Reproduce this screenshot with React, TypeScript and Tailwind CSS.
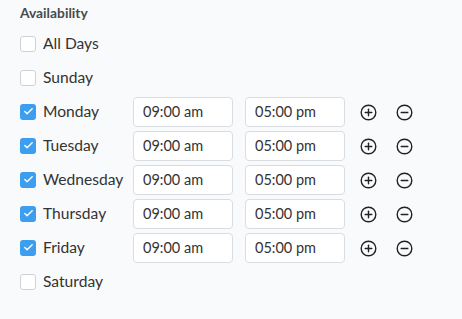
import { Check } from "lucide-react";

const days = [
  { name: "All Days", on: false },
  { name: "Sunday", on: false },
  { name: "Monday", on: true },
  { name: "Tuesday", on: true },
  { name: "Wednesday", on: true },
  { name: "Thursday", on: true },
  { name: "Friday", on: true },
  { name: "Saturday", on: false },
];

function CircleIcon({ plus }: { plus?: boolean }) {
  return (
    <svg width="17" height="17" viewBox="0 0 17 17" fill="none" stroke="#222" strokeWidth="1.4" strokeLinecap="round">
      <circle cx="8.5" cy="8.5" r="7.3" />
      <path d="M5.2 8.5h6.6" />
      {plus && <path d="M8.5 5.2v6.6" />}
    </svg>
  );
}

export default function App() {
  return (
    <div className="w-[462px] h-[319px] bg-[#f9fafb] pl-5 pt-[3px] font-['Lato',sans-serif] text-[#333]">
      {/* Header */}
      <div className="h-5 leading-5 text-[13.8px] font-bold text-[#4a4a4a]">Availability</div>

      <div className="mt-1 flex flex-col">
        {days.map((d) => (
          <div key={d.name} className="h-[34px] flex items-center">
            <div className="w-[113px] flex items-center gap-[7px]">
              {d.on ? (
                <span className="w-4 h-4 rounded-[3px] bg-[#3d9ef0] flex items-center justify-center">
                  <Check size={11} strokeWidth={3} className="text-white" />
                </span>
              ) : (
                <span className="w-4 h-4 rounded-[3px] border border-[#cfd3d8] bg-white" />
              )}
              <span className="text-[15.6px] text-[#333]">{d.name}</span>
            </div>
            {d.on && (
              <div className="flex items-center">
                <div className="w-[100px] h-[30px] rounded-[4px] border border-[#d9dde2] bg-white pl-[9px] flex items-center text-[14.5px]">
                  09:00 am
                </div>
                <div className="ml-[12px] w-[100px] h-[30px] rounded-[4px] border border-[#d9dde2] bg-white pl-[9px] flex items-center text-[14.5px]">
                  05:00 pm
                </div>
                <div className="ml-[15px] flex items-center gap-[19px]">
                  <CircleIcon plus />
                  <CircleIcon />
                </div>
              </div>
            )}
          </div>
        ))}
      </div>
    </div>
  );
}
